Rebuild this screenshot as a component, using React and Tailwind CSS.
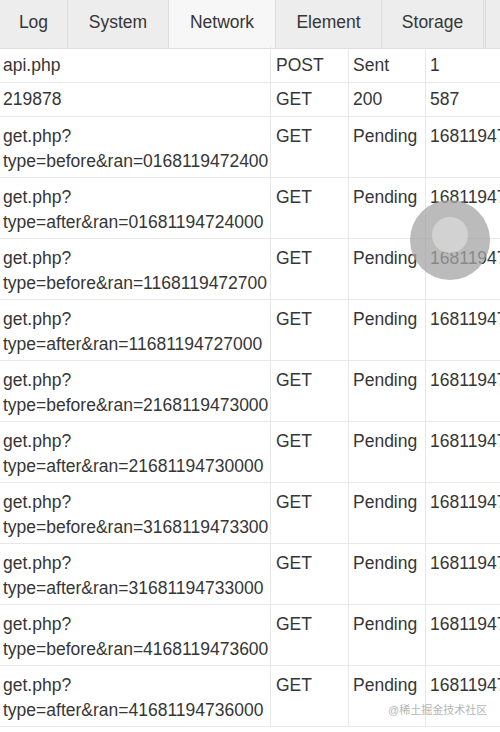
import React from 'react';

const tabs = [
  { name: 'Log', w: 'w-[68px]' },
  { name: 'System', w: 'w-[101px]' },
  { name: 'Network', w: 'w-[107px]', active: true },
  { name: 'Element', w: 'w-[106px]' },
  { name: 'Storage', w: 'w-[102px]' },
];

const rows = [
  { url: ['api.php'], method: 'POST', status: 'Sent', time: '1' },
  { url: ['219878'], method: 'GET', status: '200', time: '587' },
  { url: ['get.php?', 'type=before&ran=0168119472400'], method: 'GET', status: 'Pending', time: '1681194724000' },
  { url: ['get.php?', 'type=after&ran=01681194724000'], method: 'GET', status: 'Pending', time: '1681194724000' },
  { url: ['get.php?', 'type=before&ran=1168119472700'], method: 'GET', status: 'Pending', time: '1681194727000' },
  { url: ['get.php?', 'type=after&ran=11681194727000'], method: 'GET', status: 'Pending', time: '1681194727000' },
  { url: ['get.php?', 'type=before&ran=2168119473000'], method: 'GET', status: 'Pending', time: '1681194730000' },
  { url: ['get.php?', 'type=after&ran=21681194730000'], method: 'GET', status: 'Pending', time: '1681194730000' },
  { url: ['get.php?', 'type=before&ran=3168119473300'], method: 'GET', status: 'Pending', time: '1681194733000' },
  { url: ['get.php?', 'type=after&ran=31681194733000'], method: 'GET', status: 'Pending', time: '1681194733000' },
  { url: ['get.php?', 'type=before&ran=4168119473600'], method: 'GET', status: 'Pending', time: '1681194736000' },
  { url: ['get.php?', 'type=after&ran=41681194736000'], method: 'GET', status: 'Pending', time: '1681194736000' },
];

const App = () => {
  return (
    <div
      className="relative w-[500px] h-[732px] overflow-hidden bg-white text-[#363636] text-[17.5px] leading-[25px]"
      style={{ fontFamily: '"Liberation Sans", Arial, sans-serif' }}
    >
      {/* tab bar */}
      <div className="flex h-[49px] bg-[#ededed] border-b border-[#dedede]">
        {tabs.map((tab) => (
          <div
            key={tab.name}
            className={`${tab.w} shrink-0 flex items-center justify-center border-r border-[#dcdcdc] pb-[3px] ${
              tab.active ? 'bg-[#f7f7f7]' : ''
            }`}
          >
            {tab.name}
          </div>
        ))}
        <div className="w-[2px] shrink-0 border-r border-[#dcdcdc]"></div>
        <div className="flex-1"></div>
      </div>

      {/* request list */}
      <div className="flex flex-col">
        {rows.map((row, i) => (
          <div
            key={i}
            className={`flex border-b border-[#e8e8e8] ${row.url.length > 1 ? 'h-[61px] pt-[7px]' : 'h-[34px] pt-[4px]'}`}
          >
            <div className="w-[271px] shrink-0 pl-[3px] border-r border-[#e8e8e8] -mt-[7px] pt-[7px] whitespace-nowrap overflow-hidden">
              {row.url.map((line) => (
                <div key={line}>{line}</div>
              ))}
            </div>
            <div className="w-[78px] shrink-0 pl-[5px] border-r border-[#e8e8e8] -mt-[7px] pt-[7px]">{row.method}</div>
            <div className="w-[77px] shrink-0 pl-[4px] border-r border-[#e8e8e8] -mt-[7px] pt-[7px]">{row.status}</div>
            <div className="flex-1 pl-[4px] whitespace-nowrap overflow-hidden">{row.time}</div>
          </div>
        ))}
      </div>

      {/* touch indicator */}
      <div className="absolute left-[410px] top-[200px] w-[80px] h-[80px] rounded-full bg-[#a4a4a4]/75 flex items-start justify-center pt-[17px]">
        <div className="w-[36px] h-[36px] rounded-full bg-[#d8d8d8]/80"></div>
      </div>

      {/* watermark */}
      <div
        className="absolute left-[388px] top-[703px] whitespace-nowrap text-[11px] leading-[14px] text-[#b5b5b5]"
        style={{ fontFamily: '"Liberation Sans", "Noto Sans CJK SC", sans-serif' }}
      >
        @稀土掘金技术社区
      </div>
    </div>
  );
};

export default App;
